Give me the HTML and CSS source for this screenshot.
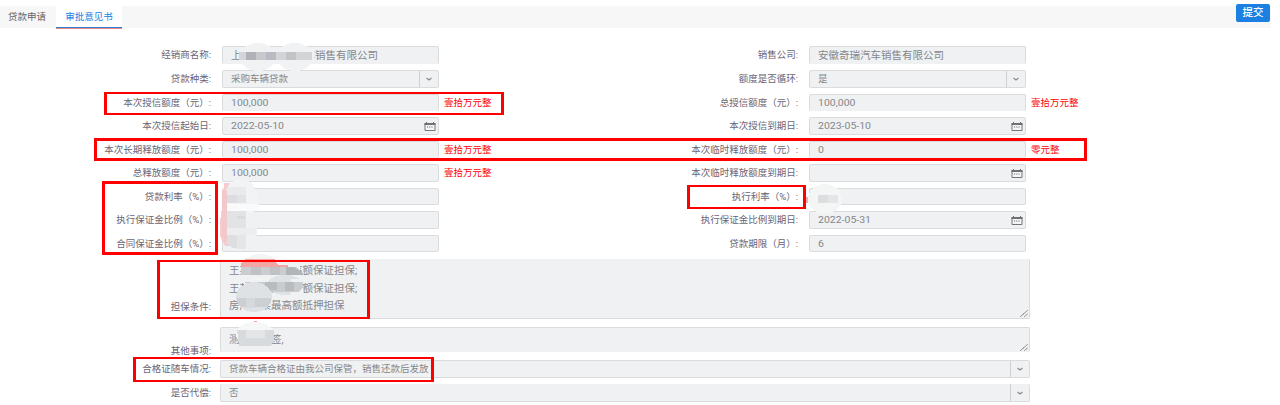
FILE: index.html
```html
<!DOCTYPE html>
<html lang="zh-CN">
<head>
<meta charset="utf-8">
<title>审批意见书</title>
<link rel="stylesheet" href="styles.css">
</head>
<body>
<svg class="defs" width="0" height="0">
  <symbol id="chev" viewBox="0 0 8 6"><path d="M1.5 2 L4 4 L6.5 2" fill="none" stroke="#888" stroke-width="1.1"/></symbol>
  <symbol id="cal" viewBox="0 0 12 9"><path d="M1 1.500h10v7H1z" fill="#f4f5f6" stroke="#75757a"/><path d="M.5 1h11v2H.5z" fill="#707074"/><path d="M2.5 0v1.500M9.500 0v1.500" stroke="#707074"/><path d="M3 5h6" stroke="#777" stroke-dasharray="1.200 1"/></symbol>
  <symbol id="grip" viewBox="0 0 8 7"><path d="M.5 6.500L7.500 .5M4.500 6.500L7.500 4" stroke="#555" stroke-width="1" stroke-dasharray="1.200 .5"/></symbol>
</svg>
<header class="tabs">
  <div class="tab"><span>贷款申请</span></div>
  <div class="tab active"><span>审批意见书</span></div>
  <button class="submit">提交</button>
</header>
<main class="form">
  <div class="rows">
    <label>经销商名称:</label><div class="field open"><span class="wide">上海某某某某某车销售有限公司</span></div><em></em>
    <label>销售公司:</label><div class="field open"><span class="wide">安徽奇瑞汽车销售有限公司</span></div><em></em>

    <label>贷款种类:</label><div class="field"><span>采购车辆贷款</span><i class="drop"><svg><use href="#chev"/></svg></i></div><em></em>
    <label>额度是否循环:</label><div class="field"><span>是</span><i class="drop"><svg><use href="#chev"/></svg></i></div><em></em>

    <label>本次授信额度（元）:</label><div class="field open short"><span class="num">100,000</span></div><em>壹拾万元整</em>
    <label>总授信额度（元）:</label><div class="field open short"><span class="num">100,000</span></div><em>壹拾万元整</em>

    <label>本次授信起始日:</label><div class="field"><span class="num">2022-05-10</span><svg class="cal"><use href="#cal"/></svg></div><em></em>
    <label>本次授信到期日:</label><div class="field"><span class="num">2023-05-10</span><svg class="cal"><use href="#cal"/></svg></div><em></em>

    <label>本次长期释放额度（元）:</label><div class="field open short"><span class="num">100,000</span></div><em>壹拾万元整</em>
    <label>本次临时释放额度（元）:</label><div class="field open short"><span class="num">0</span></div><em>零元整</em>

    <label>总释放额度（元）:</label><div class="field"><span class="num">100,000</span></div><em>壹拾万元整</em>
    <label>本次临时释放额度到期日:</label><div class="field"><svg class="cal"><use href="#cal"/></svg></div><em></em>

    <label>贷款利率（%）:</label><div class="field short"></div><em></em>
    <label>执行利率（%）:</label><div class="field short"></div><em></em>

    <label>执行保证金比例（%）:</label><div class="field"></div><em></em>
    <label>执行保证金比例到期日:</label><div class="field"><span class="num">2022-05-31</span><svg class="cal"><use href="#cal"/></svg></div><em></em>

    <label>合同保证金比例（%）:</label><div class="field short"></div><em></em>
    <label>贷款期限（月）:</label><div class="field short"><span class="num">6</span></div><em></em>
  </div>
  <div class="wide-rows">
    <label class="low">担保条件:</label>
    <div class="area tall"><p>王某某某某最高额保证担保;</p><p>王某某某某最高额保证担保;</p><p>房产某某最高额抵押担保</p><svg class="grip"><use href="#grip"/></svg></div>
    <label class="low clip">其他事项:</label>
    <div class="area small"><p>测试某某签,</p><svg class="grip"><use href="#grip"/></svg></div>
    <label>合格证随车情况:</label>
    <div class="field"><span>贷款车辆合格证由我公司保管，销售还款后发放</span><i class="drop"><svg><use href="#chev"/></svg></i></div>
    <label>是否代偿:</label>
    <div class="field notop"><span>否</span><i class="drop"><svg><use href="#chev"/></svg></i></div>
  </div>
</main>
<svg class="marks" width="1280" height="405" viewBox="0 0 1280 405" shape-rendering="crispEdges">
  <g fill="#f0f2f3"><ellipse cx="258" cy="57" rx="18" ry="14"/><ellipse cx="295" cy="57" rx="18" ry="14"/><path d="M239 49h75v13h-75z"/></g>
  <path fill="#d3d4d6" d="M239 52h73v8h-73z"/><path fill="#b1b2b7" d="M246 52h10v8h-10z"/><path fill="#c6c8cb" d="M256 52h10v8h-10z"/><path fill="#b8bbc3" d="M266 52h10v8h-10z"/><path fill="#c2c3c6" d="M286 52h10v8h-10z"/>
  <path fill="#f5cdce" d="M224 183h7v63h-6l-5-10v-15l3-20z"/>
  <ellipse cx="241" cy="199" rx="17" ry="20" fill="#f2f3f4"/>
  <path fill="#e9eaec" d="M227 187h19v16h-19z"/><path fill="#dbdde0" d="M227 195h10v8h-10z"/><path fill="#e1e3e5" d="M237 195h9v8h-9z"/>
  <ellipse cx="240" cy="229" rx="17" ry="21" fill="#f0f1f2"/><path fill="#f9fafa" d="M227 204h32v7h-32z"/>
  <path fill="#e2e3e5" d="M227 211h19v17h-19z"/><path fill="#d9dcde" d="M237 216h8v3h-8z"/><path fill="#eceded" d="M227 228h29v7h-29z"/><path fill="#dcdee0" d="M227 235h10v13h-4l-6-4z"/><path fill="#e5e6e8" d="M237 235h9v14h-9z"/>
  <path fill="#f3c8ca" d="M222 190h5v52h-5z"/>
  <path fill="#f3a9a9" d="M806 197h3v6h-3z"/><ellipse cx="825" cy="199" rx="17" ry="15" fill="#f4f5f5"/><path fill="#dcddde" d="M818 195h10v8h-10z"/><path fill="#e2e6e9" d="M828 195h10v8h-10z"/>
  <ellipse cx="260" cy="267" rx="18" ry="13" fill="#f4f4f5"/><path fill="#f1a5a5" d="M245 259h30l3 8h18v2h-55v-4z"/>
  <path fill="#eff1f3" d="M243 264h57v14h-57z"/><path fill="#f1a5a5" d="M243 260h32l3 5h10v2h-47v-3z"/>
  <path fill="#cacccf" d="M241 267h55l7 6v2h-62z"/><path fill="#bfc1c4" d="M251 267h10v8h-10zM270 267h10v8h-10z"/><path fill="#b2b5b8" d="M286 267h8l9 6v2h-17z"/>
  <ellipse cx="285" cy="285" rx="18" ry="10" fill="#dfe2e4"/><path fill="#eff1f3" d="M291 279h12v16h-12z"/>
  <path fill="#c9cccf" d="M245 282h58v6l-5 4h-48z"/><path fill="#b8bcbf" d="M265 282h12v8h-12zM285 282h9v9h-9z"/>
  <ellipse cx="254" cy="297" rx="18" ry="15" fill="#dfe2e4"/><path fill="#cdd0d2" d="M237 298h34v5l-5 4h-25l-4-5z"/><path fill="#d6d9db" d="M246 298h9v10h-9z"/>
  <ellipse cx="255" cy="334" rx="19" ry="12" fill="#f6f7f7"/><path fill="#d8dbdd" d="M237 330h37v10l-3 6h-32z"/><path fill="#e3e5e7" d="M246 330h19v8h-19z"/><path fill="#f1a5a5" d="M254 321h3v1h-3z"/>
</svg>
<div class="box" style="left:104px;top:92px;width:400px;height:23px"></div>
<div class="box thick" style="left:94px;top:138px;width:993px;height:23px"></div>
<div class="box thick" style="left:102px;top:181px;width:116px;height:74px"></div>
<div class="box" style="left:687px;top:185px;width:119px;height:24px"></div>
<div class="box" style="left:157px;top:260px;width:213px;height:59px"></div>
<div class="box" style="left:133px;top:357px;width:301px;height:25px"></div>
</body>
</html>
```
FILE: styles.css
```css
* { box-sizing: border-box; }
body { margin: 0; width: 1280px; height: 405px; overflow: hidden; position: relative; background: #fff; font: 9.5px/12px Roboto, "Noto Sans CJK SC", sans-serif; color: #6a6474; }
.defs { position: absolute; }
.tabs { display: flex; width: 1271px; height: 23px; margin-top: 6px; background: linear-gradient(#f7f7f7 22px, #fff 22px); }
.tab { width: 56px; padding: 5px 2px 0 0; text-align: center; color: #666; }
.tab span, label, .field span, em, .area p { white-space: nowrap; }
.tab.active { width: 66px; padding-right: 0; background: #fff; color: #1b80e2; border-bottom: 1px solid #ee8588; box-shadow: inset 0 -1px #2b7ed0; }
.submit { margin: -2px 1px 0 auto; width: 34px; height: 18px; border: 0; border-radius: 2px; padding: 0; background: #1b80e2; color: #fff; font: 500 10.5px/18px Roboto, "Noto Sans CJK SC", sans-serif; }
.form { padding-top: 17px; }
.rows { display: grid; grid-template-columns: 211px 228px 100px 259px 228px 100px; grid-template-rows: 24px 24px 23px 24px 23px 24px 23px 24px 24px; align-items: start; }
label { display: block; text-align: right; line-height: 18px; }
em { font-style: normal; color: #f00; padding-left: 5px; line-height: 17px; }
.field { display: flex; align-items: center; height: 18px; margin-left: 11px; border: 1px solid #dadbdd; border-radius: 2px; background: #eff1f3; padding-left: 8px; color: #85878b; }
.field.short { height: 17px; }
.field.open { border-bottom: 0; }
.wide { font-size: 10.5px; padding-top: 1px; }
.num { font-size: 10.5px; transform: scaleY(.88); }
.drop { margin-left: auto; width: 19px; height: 100%; border-left: 1px solid #cfd0d2; display: flex; align-items: center; justify-content: center; }
.drop svg { width: 8px; height: 6px; }
.cal { width: 12px; height: 9px; margin: 1px 2px 0 auto; }
.wide-rows { display: grid; grid-template-columns: 211px 819px; grid-template-rows: 68px 33px 24px 18px; align-items: start; }
.wide-rows .field, .area { margin-left: 9px; }
.field.notop { border-top: 0; }
.low { align-self: end; padding-bottom: 11px; }
.clip { padding: 2px 0 0; height: 21px; line-height: 19px; }
.area { position: relative; border: 1px solid #dadbdd; background: #eff1f3; border-radius: 2px; padding-left: 8px; color: #85878b; font-size: 10.5px; }
.area p { margin: 0; line-height: 17.5px; }
.tall { height: 60px; border-top: 0; padding-top: 3px; }
.small { height: 25px; border-bottom: 0; padding-top: 3px; }
.grip { position: absolute; right: 1px; bottom: 1px; width: 8px; height: 7px; }
.marks { position: absolute; left: 0; top: 0; }
.box { position: absolute; border: solid #f00; border-width: 2px 3px; }
.thick { border-width: 3px; }
```
